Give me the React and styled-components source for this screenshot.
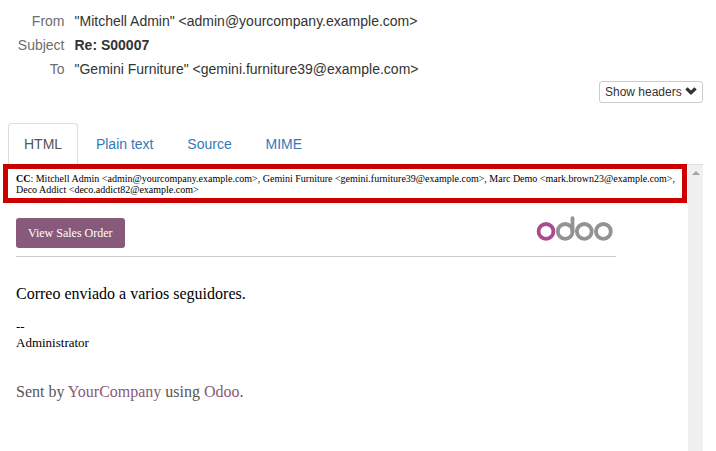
import React, { useState } from 'react'
import styled, { createGlobalStyle } from 'styled-components'

const headers = [
    { label: 'From', value: '"Mitchell Admin" <admin@yourcompany.example.com>' },
    { label: 'Subject', value: 'Re: S00007', bold: true },
    { label: 'To', value: '"Gemini Furniture" <gemini.furniture39@example.com>' },
]

const tabs = ['HTML', 'Plain text', 'Source', 'MIME']

const Chevron = () => (
    <svg width="12" height="10" viewBox="0 0 12 10">
        <path d="M0.3 2.5 L2.6 0.3 L6 3.5 L9.4 0.3 L11.7 2.5 L6 8 Z" fill="#333" />
    </svg>
)

const OdooLogo = () => (
    <svg width="80" height="30" viewBox="0 0 80 30" fill="none" strokeWidth="3.8">
        <circle cx="48.3" cy="16.4" r="7.4" stroke="#939393" />
        <circle cx="67.4" cy="16.4" r="7.4" stroke="#939393" />
        <circle cx="29.2" cy="16.4" r="7.4" stroke="#939393" />
        <path d="M36.5 3.2 V16.4" stroke="#939393" strokeLinecap="round" />
        <circle cx="10" cy="16.4" r="7.4" stroke="#a84c91" />
    </svg>
)

const App = () => {
    const [active, setActive] = useState('HTML')

    return (
        <Page>
            <GlobalStyle />
            <HeaderList>
                {headers.map(({ label, value, bold }) => (
                    <HeaderRow key={label}>
                        <HeaderLabel>{label}</HeaderLabel>
                        <HeaderValue $bold={bold}>{value}</HeaderValue>
                    </HeaderRow>
                ))}
            </HeaderList>
            <Actions>
                <HeadersButton>
                    Show headers
                    <Chevron />
                </HeadersButton>
            </Actions>
            <TabBar>
                {tabs.map((tab) => (
                    <Tab key={tab} $active={tab === active} onClick={() => setActive(tab)}>
                        {tab}
                    </Tab>
                ))}
            </TabBar>
            <Preview>
                <Mail>
                    <CopyLine>
                        <b>CC</b>: Mitchell Admin &lt;admin@yourcompany.example.com&gt;, Gemini Furniture &lt;gemini.furniture39@example.com&gt;, Marc Demo &lt;mark.brown23@example.com&gt;,<br />
                        Deco Addict &lt;deco.addict82@example.com&gt;
                    </CopyLine>
                    <MailTop>
                        <OrderButton>View Sales Order</OrderButton>
                        <OdooLogo />
                    </MailTop>
                    <Message>Correo enviado a varios seguidores.</Message>
                    <Signature>
                        --<br />
                        Administrator
                    </Signature>
                    <SentBy>
                        Sent by <MailLink>YourCompany</MailLink> using <MailLink>Odoo</MailLink>.
                    </SentBy>
                </Mail>
                <Scrollbar>
                    <svg width="8" height="4" viewBox="0 0 8 4">
                        <path d="M0 4 L4 0 L8 4 Z" fill="#a3a3a3" />
                    </svg>
                </Scrollbar>
                <Highlight />
            </Preview>
        </Page>
    )
}

const GlobalStyle = createGlobalStyle`
    * {
        box-sizing:border-box;
    }
    body {
        margin:0;
        background-color:#fff;
        overflow:hidden;
    }
`
const Page = styled.div`
    width:716px;
    height:451px;
    padding:9px 13px 0 8px;
    display:flex;
    flex-direction:column;
    overflow:hidden;
    font-family:"Liberation Sans", Arial, sans-serif;
    font-size:14px;
    line-height:20px;
    color:#333;
`
const HeaderList = styled.dl`
    margin:0;
`
const HeaderRow = styled.div`
    height:24px;
    padding-top:2px;
    display:flex;
    gap:10px;
`
const HeaderLabel = styled.dt`
    width:56.5px;
    text-align:right;
    color:#6e6e6e;
`
const HeaderValue = styled.dd`
    margin:0;
    font-weight:${({ $bold }) => ($bold ? 700 : 400)};
`
const Actions = styled.div`
    display:flex;
    justify-content:flex-end;
`
const HeadersButton = styled.button`
    width:104px;
    height:22px;
    padding:0 5px;
    display:flex;
    align-items:center;
    justify-content:space-between;
    border:1px solid #ccc;
    border-radius:3px;
    background-color:#fff;
    font-family:inherit;
    font-size:12px;
    line-height:18px;
    color:#333;
    white-space:nowrap;
`
const TabBar = styled.div`
    height:42px;
    margin-top:20px;
    display:flex;
    gap:1.8px;
    flex-shrink:0;
    border-bottom:1px solid #ddd;
`
const Tab = styled.button`
    height:42px;
    padding:10px 15px;
    border:1px solid ${({ $active }) => ($active ? '#ddd' : 'transparent')};
    border-bottom-color:transparent;
    border-radius:4px 4px 0 0;
    background-color:${({ $active }) => ($active ? '#fff' : 'transparent')};
    font-family:inherit;
    font-size:14px;
    line-height:20px;
    color:${({ $active }) => ($active ? '#555' : '#337ab7')};
    cursor:pointer;
`
const Preview = styled.div`
    position:relative;
    flex:1;
    display:flex;
`
const Mail = styled.div`
    flex:1;
    padding:8px;
    font-family:"Liberation Serif", "Times New Roman", serif;
    color:#000;
`
const CopyLine = styled.div`
    font-size:10px;
    line-height:11px;
    white-space:nowrap;
`
const MailTop = styled.div`
    width:600px;
    height:46px;
    margin-top:16px;
    padding-top:7px;
    display:flex;
    justify-content:space-between;
    border-bottom:1px solid #ccc;

    svg {
        margin-top:-3px;
    }
`
const OrderButton = styled.a`
    height:30px;
    padding:8px 12px;
    border-radius:3px;
    background-color:#875a7b;
    font-size:12px;
    line-height:14px;
    color:#fff;
`
const Message = styled.p`
    margin:27px 0 0;
    font-size:16px;
    line-height:20px;
`
const Signature = styled.p`
    margin:15px 0 0;
    font-size:13px;
    line-height:16px;
`
const SentBy = styled.p`
    margin:32px 0 0;
    font-size:16px;
    line-height:18px;
    color:#555;
`
const MailLink = styled.a`
    color:#875a7b;
`
const Scrollbar = styled.div`
    width:15px;
    padding-top:6px;
    display:flex;
    justify-content:center;
    align-items:flex-start;
    background-color:#f0f0f0;
`
const Highlight = styled.div`
    position:absolute;
    top:-1px;
    left:-5px;
    width:684px;
    height:39px;
    border:5px solid #c00;
    pointer-events:none;
`

export default App
